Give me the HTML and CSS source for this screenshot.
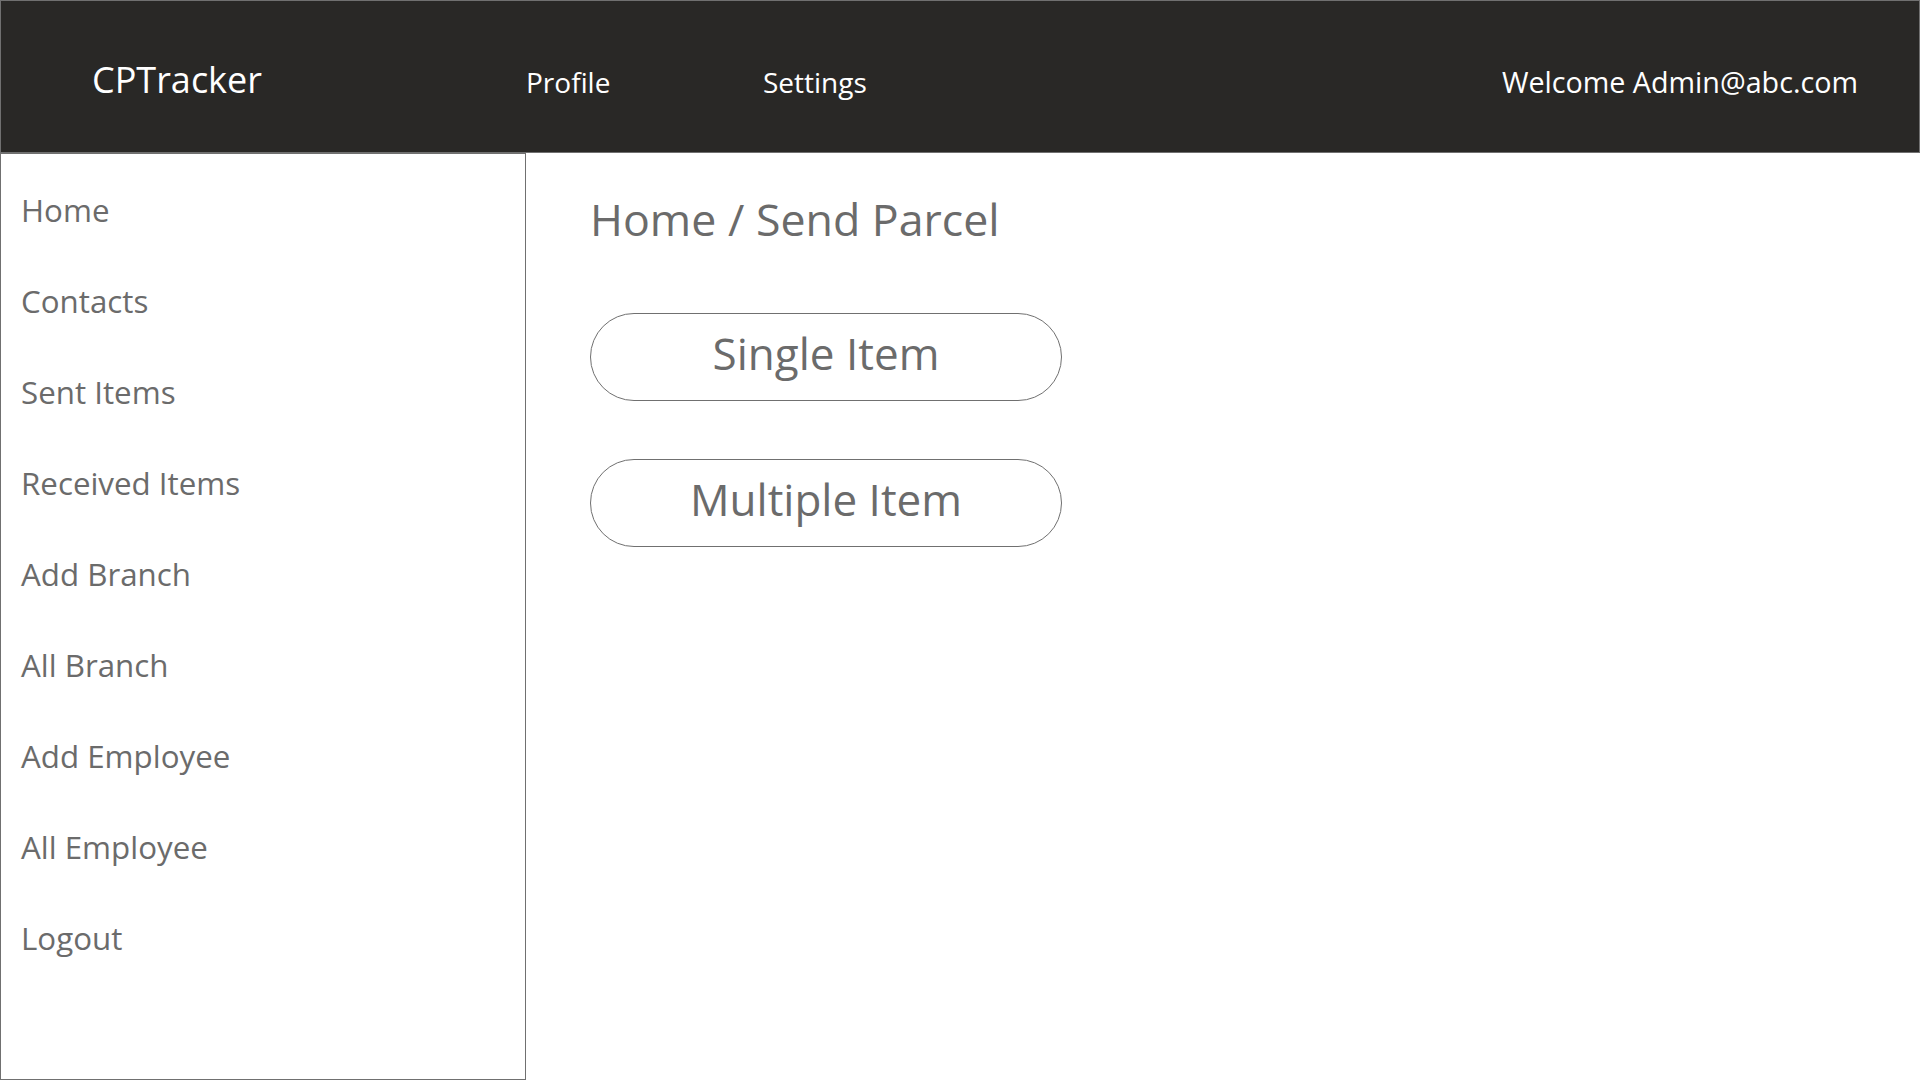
FILE: index.html
```html
<!DOCTYPE html>
<html lang="en">
<head>
<meta charset="utf-8">
<title>CPTracker - Send Parcel</title>
<link rel="stylesheet" href="styles.css">
</head>
<body>
<div class="page">
  <header class="topbar">
    <div class="brand">CPTracker</div>
    <nav class="topnav">
      <a class="topnav-link profile" href="#">Profile</a>
      <a class="topnav-link" href="#">Settings</a>
    </nav>
    <div class="welcome">Welcome Admin@abc.com</div>
  </header>
  <div class="body-row">
    <aside class="sidebar">
      <ul class="side-list">
        <li class="side-item">Home</li>
        <li class="side-item">Contacts</li>
        <li class="side-item">Sent Items</li>
        <li class="side-item">Received Items</li>
        <li class="side-item">Add Branch</li>
        <li class="side-item">All Branch</li>
        <li class="side-item">Add Employee</li>
        <li class="side-item">All Employee</li>
        <li class="side-item">Logout</li>
      </ul>
    </aside>
    <main class="main">
      <h1 class="crumb">Home / Send Parcel</h1>
      <div class="actions">
        <button class="pill">Single Item</button>
        <button class="pill">Multiple Item</button>
      </div>
    </main>
  </div>
</div>
</body>
</html>
```

FILE: styles.css
```css
* { box-sizing: border-box; }
html, body { margin: 0; padding: 0; background: #ffffff; }
body {
  font-family: "Open Sans", "Noto Sans", "Liberation Sans", sans-serif;
  color: #6b6b6b;
}
.page {
  width: 1920px;
  height: 1080px;
  display: flex;
  flex-direction: column;
  overflow: hidden;
}
.topbar {
  height: 153px;
  flex: 0 0 153px;
  background: #292826;
  border: 1px solid #707070;
  display: flex;
  align-items: baseline;
  padding: 61px 61px 0 91px;
  color: #ffffff;
}
.brand {
  width: 434px;
  font-size: 36px;
  line-height: 1;
}
.topnav {
  display: flex;
  align-items: baseline;
}
.topnav-link {
  color: #ffffff;
  text-decoration: none;
  font-size: 28px;
  line-height: 1;
}
.topnav-link.profile { width: 237px; }
.welcome {
  margin-left: auto;
  font-size: 28.7px;
  line-height: 1;
}
.body-row {
  flex: 1;
  display: flex;
  min-height: 0;
}
.sidebar {
  width: 526px;
  flex: 0 0 526px;
  border: 1px solid #707070;
  padding: 11px 0 0 20px;
}
.side-list {
  list-style: none;
  margin: 0;
  padding: 0;
}
.side-item {
  font-size: 31.3px;
  line-height: 91px;
  height: 91px;
  color: #6b6b6b;
}
.main {
  flex: 1;
  padding: 44px 0 0 64px;
}
.crumb {
  margin: 0;
  font-weight: 400;
  font-size: 44.7px;
  line-height: 1;
  color: #6b6b6b;
}
.actions {
  margin-top: 71px;
  display: flex;
  flex-direction: column;
  gap: 58px;
  align-items: flex-start;
}
.pill {
  width: 472px;
  height: 88px;
  border: 1px solid #707070;
  border-radius: 44px;
  background: #ffffff;
  font-family: inherit;
  font-size: 44px;
  line-height: 1;
  color: #6b6b6b;
  display: flex;
  align-items: center;
  justify-content: center;
  padding: 0 0 8px 0;
}
```
